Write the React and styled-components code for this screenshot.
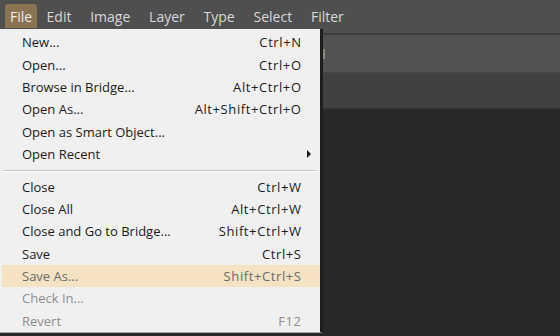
import React from 'react';
import styled, {createGlobalStyle} from 'styled-components';

const GlobalStyle = createGlobalStyle`
    html, body {
        margin: 0;
        padding: 0;
        background: #282828;
        overflow: hidden;
    }
    body {
        font-family: "Open Sans", "Noto Sans", "Liberation Sans", sans-serif;
    }
`;

const Screen = styled.div`
    position: relative;
    width: 560px;
    height: 336px;
    display: flex;
    flex-direction: column;
    background: #282828;
    overflow: hidden;
`;

const MenuBar = styled.div`
    height: 33px;
    display: flex;
    align-items: flex-end;
    padding-left: 5px;
    background: #4f4f4f;
    border-bottom: 2px solid #3c3c3c;
`;

const MenuTitle = styled.div`
    height: 24px;
    padding: 0 ${p => p.$pad || 9.4}px;
    margin-bottom: 5px;
    display: flex;
    align-items: center;
    font-size: 14px;
    color: ${p => p.$active ? '#f1ece4' : '#d8d8d8'};
    background: ${p => p.$active ? '#8a7352' : 'transparent'};
    border-radius: 3px 3px 0 0;
`;

const OptionsBar = styled.div`
    height: 37px;
    display: flex;
    align-items: center;
    padding-left: 322px;
    background: #525252;
    border-bottom: 2px solid #464646;
`;

const Grip = styled.div`
    width: 3px;
    height: 10px;
    background: #8a8a80;
`;

const TabStrip = styled.div`
    height: 34px;
    background: #414141;
    border-bottom: 2px solid #2f2f2f;
`;

const Canvas = styled.div`
    flex: 1;
    background: #282828;
`;

const Dropdown = styled.div`
    position: absolute;
    left: 0;
    top: 29px;
    width: 323px;
    padding: 2px 0 0 2px;
    background: #f0f0f0;
    border-right: 3px solid #1e1e1e;
    border-bottom: 1px solid #a8a8a8;
    box-sizing: border-box;
    font-size: 13px;
`;

const Item = styled.div`
    height: 22.4px;
    display: flex;
    align-items: center;
    padding: 0 19px 0 20px;
    color: ${p => p.$hover ? '#6a6a6a' : p.$disabled ? '#8e8e8e' : '#1b1b1b'};
    background: ${p => p.$hover ? '#f4e2c2' : 'transparent'};
`;

const Label = styled.span`
    flex: 1;
    white-space: nowrap;
`;

const Shortcut = styled.span`
    white-space: nowrap;
    letter-spacing: 0.6px;
    margin-right: -0.6px;
`;

const Arrow = styled.span`
    width: 0;
    height: 0;
    margin-right: -10px;
    border-top: 4px solid transparent;
    border-bottom: 4px solid transparent;
    border-left: 4px solid #1b1b1b;
`;

const Separator = styled.div`
    height: 10px;
    display: flex;
    align-items: center;
    padding: 0 4px 0 1px;

    &::before {
        content: '';
        flex: 1;
        height: 1px;
        background: #c4c4c4;
        box-shadow: 0 1px 0 #ffffff;
    }
`;

const menuTitles = [
    {name: 'File', active: true, pad: 5},
    {name: 'Edit'},
    {name: 'Image'},
    {name: 'Layer'},
    {name: 'Type'},
    {name: 'Select'},
    {name: 'Filter'},
];

const groups = [
    [
        {label: 'New...', key: 'Ctrl+N'},
        {label: 'Open...', key: 'Ctrl+O'},
        {label: 'Browse in Bridge...', key: 'Alt+Ctrl+O'},
        {label: 'Open As...', key: 'Alt+Shift+Ctrl+O'},
        {label: 'Open as Smart Object...'},
        {label: 'Open Recent', sub: true},
    ],
    [
        {label: 'Close', key: 'Ctrl+W'},
        {label: 'Close All', key: 'Alt+Ctrl+W'},
        {label: 'Close and Go to Bridge...', key: 'Shift+Ctrl+W'},
        {label: 'Save', key: 'Ctrl+S'},
        {label: 'Save As...', key: 'Shift+Ctrl+S', hover: true},
        {label: 'Check In...', disabled: true},
        {label: 'Revert', key: 'F12', disabled: true},
    ],
];

export default function App() {
    return (
        <Screen>
            <GlobalStyle />
            <MenuBar>
                {menuTitles.map(m => (
                    <MenuTitle key={m.name} $active={m.active} $pad={m.pad}>{m.name}</MenuTitle>
                ))}
            </MenuBar>
            <OptionsBar>
                <Grip />
            </OptionsBar>
            <TabStrip />
            <Canvas />
            <Dropdown>
                {groups.map((group, gi) => (
                    <React.Fragment key={gi}>
                        {gi > 0 && <Separator />}
                        {group.map(item => (
                            <Item key={item.label} $disabled={item.disabled} $hover={item.hover}>
                                <Label>{item.label}</Label>
                                {item.key && <Shortcut>{item.key}</Shortcut>}
                                {item.sub && <Arrow />}
                            </Item>
                        ))}
                    </React.Fragment>
                ))}
            </Dropdown>
        </Screen>
    );
}
